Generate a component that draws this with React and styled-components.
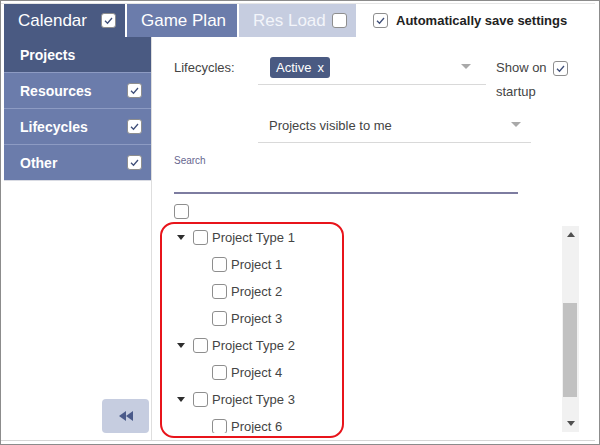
import React from 'react';
import styled, { createGlobalStyle } from 'styled-components';

const NAVY = '#4a5a82';
const MID = '#6b7cab';
const LIGHT = '#c6cde0';

const GlobalStyle = createGlobalStyle`
  html, body { margin: 0; padding: 0; background: #fff; }
  body { font-family: "Liberation Sans", Arial, sans-serif; }
  * { box-sizing: border-box; }
`;

const Frame = styled.div`
  position: relative;
  width: 600px;
  height: 445px;
  border: 1px solid #8c8c8c;
  background: #fff;
  overflow: hidden;
`;

const Panel = styled.div`
  margin-top: 2px;
  width: 594px;
  height: 438px;
  border-top: 1px solid #e6e6e6;
  border-bottom: 1px solid #d6d6d6;
  padding-left: 3px;
  display: flex;
  flex-direction: column;
`;

const TabBar = styled.div`
  height: 33px;
  display: flex;
  align-items: stretch;
  gap: 2px;
  flex-shrink: 0;
`;

const tabBg = { dark: NAVY, mid: MID, light: LIGHT };

const Tab = styled.div`
  width: ${(p) => p.$w}px;
  background: ${(p) => tabBg[p.$variant]};
  color: ${(p) => (p.$variant === 'light' ? '#f3f5fa' : '#fff')};
  font-size: 17px;
  display: flex;
  align-items: center;
  justify-content: space-between;
  padding: 0 9px 0 14px;
`;

const Box = styled.span`
  width: 15px;
  height: 15px;
  border: 1px solid #8e8e8e;
  border-radius: 3px;
  background: #fff;
  display: inline-flex;
  align-items: center;
  justify-content: center;
  flex-shrink: 0;
`;

const Check = () => (
  <svg width="11" height="11" viewBox="0 0 11 11">
    <polyline points="2,5.8 4.5,8.2 9,3" fill="none" stroke="#3e4e78" strokeWidth="1.3" />
  </svg>
);

const CheckBox = ({ checked }) => <Box>{checked ? <Check /> : null}</Box>;

const AutoSave = styled.label`
  margin-left: 15px;
  display: flex;
  align-items: center;
  gap: 8px;
  font-size: 13px;
  font-weight: bold;
  color: #222;
`;

const Body = styled.div`
  flex: 1;
  display: flex;
  min-height: 0;
`;

const Sidebar = styled.nav`
  width: 148px;
  border-right: 1px solid #dedede;
  display: flex;
  flex-direction: column;
  flex-shrink: 0;
`;

const SideItem = styled.div`
  height: 36px;
  background: ${(p) => (p.$active ? NAVY : MID)};
  border-bottom: 1px solid ${(p) => (p.$last ? '#d9dbe3' : '#8d9bc3')};
  color: #fff;
  font-size: 14px;
  font-weight: bold;
  display: flex;
  align-items: center;
  justify-content: space-between;
  padding: 0 9px 0 16px;
`;

const CollapseButton = styled.button`
  margin-top: auto;
  align-self: flex-end;
  margin-right: 2px;
  margin-bottom: 7px;
  width: 47px;
  height: 34px;
  border: none;
  border-radius: 4px;
  background: ${LIGHT};
  display: flex;
  align-items: center;
  justify-content: center;
  padding: 0;
`;

const Content = styled.section`
  flex: 1;
  display: flex;
  flex-direction: column;
  padding: 0 16px 0 22px;
  color: #444;
  font-size: 13px;
  min-width: 0;
`;

const FilterRow = styled.div`
  margin-top: 19px;
  display: flex;
  align-items: flex-start;
`;

const FieldLabel = styled.div`
  width: 84px;
  line-height: 23px;
  flex-shrink: 0;
`;

const SelectField = styled.div`
  width: ${(p) => p.$w}px;
  height: ${(p) => p.$h}px;
  margin-left: ${(p) => p.$indent || 0}px;
  border-bottom: 1px solid #d9d9d9;
  display: flex;
  align-items: center;
  justify-content: space-between;
  padding: ${(p) => p.$pad};
  flex-shrink: 0;
`;

const Chip = styled.span`
  height: 21px;
  background: ${NAVY};
  color: #fff;
  border-radius: 3px;
  padding: 0 6px;
  display: inline-flex;
  align-items: center;
  gap: 6px;
  font-size: 13px;
`;

const Arrow = () => (
  <svg width="10" height="6" viewBox="0 0 10 6">
    <polygon points="0,0 10,0 5,5" fill="#a9a9a9" />
  </svg>
);

const ShowOn = styled.div`
  margin-left: 10px;
  line-height: 24px;
`;

const ShowLine = styled.div`
  display: flex;
  align-items: center;
  gap: 6px;
  height: 24px;
`;

const SearchLabel = styled.div`
  margin-top: 12px;
  font-size: 10px;
  line-height: 12px;
  color: #67668f;
`;

const SearchInput = styled.div`
  width: 344px;
  height: 27px;
  border-bottom: 2px solid #7d7ca0;
`;

const SelectAll = styled.div`
  margin-top: 10px;
  display: flex;
`;

const ListArea = styled.div`
  margin-top: 5px;
  height: 209px;
  display: flex;
  align-items: flex-start;
`;

const Tree = styled.div`
  flex: 1;
  height: 100%;
  overflow: hidden;
`;

const TreeRow = styled.div`
  height: 27px;
  display: flex;
  align-items: center;
  padding-left: ${(p) => (p.$child ? 38 : 0)}px;
  color: #444;
  font-size: 13px;
  white-space: nowrap;
`;

const Toggle = styled.span`
  width: 19px;
  padding-left: 3px;
  display: flex;
  align-items: center;
`;

const RowText = styled.span`
  margin-left: 4px;
`;

const Scrollbar = styled.div`
  margin-top: 2px;
  width: 17px;
  height: 206px;
  background: #f1f1f1;
  display: flex;
  flex-direction: column;
  flex-shrink: 0;
`;

const ScrollBtn = styled.div`
  height: 17px;
  display: flex;
  align-items: center;
  justify-content: center;
`;

const ScrollTrack = styled.div`
  flex: 1;
`;

const Thumb = styled.div`
  margin: 60px 2px 0 1px;
  height: 94px;
  background: #c1c1c1;
`;

const Annotation = styled.div`
  position: absolute;
  left: 159px;
  top: 221px;
  width: 184px;
  height: 216px;
  border: 2px solid #e8141b;
  border-radius: 14px;
  pointer-events: none;
`;

const Caret = () => (
  <svg width="8" height="5" viewBox="0 0 8 5">
    <polygon points="0,0 8,0 4,5" fill="#2e2e2e" />
  </svg>
);

const tree = [
  { type: 'Project Type 1', children: ['Project 1', 'Project 2', 'Project 3'] },
  { type: 'Project Type 2', children: ['Project 4'] },
  { type: 'Project Type 3', children: ['Project 6'] },
];

const sideItems = [
  { label: 'Projects', active: true },
  { label: 'Resources', check: true },
  { label: 'Lifecycles', check: true },
  { label: 'Other', check: true, last: true },
];

export default function App() {
  return (
    <>
      <GlobalStyle />
      <Frame>
        <Panel>
          <TabBar>
            <Tab $variant="dark" $w={121}>
              Calendar <CheckBox checked />
            </Tab>
            <Tab $variant="mid" $w={110}>Game Plan</Tab>
            <Tab $variant="light" $w={117}>
              Res Load <CheckBox />
            </Tab>
            <AutoSave>
              <CheckBox checked />
              Automatically save settings
            </AutoSave>
          </TabBar>
          <Body>
            <Sidebar>
              {sideItems.map((it) => (
                <SideItem key={it.label} $active={it.active} $last={it.last}>
                  {it.label}
                  {it.check ? <CheckBox checked /> : null}
                </SideItem>
              ))}
              <CollapseButton aria-label="Collapse">
                <svg width="14" height="10" viewBox="0 0 14 10">
                  <polygon points="0,5 7,0 7,10" fill="#4a5a8a" />
                  <polygon points="7,5 14,0 14,10" fill="#4a5a8a" />
                </svg>
              </CollapseButton>
            </Sidebar>
            <Content>
              <FilterRow>
                <FieldLabel>Lifecycles:</FieldLabel>
                <SelectField $w={228} $h={29} $pad="1px 15px 7px 12px">
                  <Chip>
                    Active <span>x</span>
                  </Chip>
                  <Arrow />
                </SelectField>
                <ShowOn>
                  <ShowLine>
                    Show on <CheckBox checked />
                  </ShowLine>
                  <div>startup</div>
                </ShowOn>
              </FilterRow>
              <SelectField $w={273} $h={30} $indent={84} $pad="0 10px 5px 11px" style={{ marginTop: 9 }}>
                <span>Projects visible to me</span>
                <Arrow />
              </SelectField>
              <SearchLabel>Search</SearchLabel>
              <SearchInput />
              <SelectAll>
                <CheckBox />
              </SelectAll>
              <ListArea>
                <Tree>
                  {tree.map((g) => (
                    <React.Fragment key={g.type}>
                      <TreeRow>
                        <Toggle>
                          <Caret />
                        </Toggle>
                        <CheckBox />
                        <RowText>{g.type}</RowText>
                      </TreeRow>
                      {g.children.map((c) => (
                        <TreeRow key={c} $child>
                          <CheckBox />
                          <RowText>{c}</RowText>
                        </TreeRow>
                      ))}
                    </React.Fragment>
                  ))}
                </Tree>
                <Scrollbar>
                  <ScrollBtn>
                    <svg width="8" height="5" viewBox="0 0 8 5">
                      <polygon points="0,5 8,5 4,0" fill="#505050" />
                    </svg>
                  </ScrollBtn>
                  <ScrollTrack>
                    <Thumb />
                  </ScrollTrack>
                  <ScrollBtn>
                    <svg width="8" height="5" viewBox="0 0 8 5">
                      <polygon points="0,0 8,0 4,5" fill="#505050" />
                    </svg>
                  </ScrollBtn>
                </Scrollbar>
              </ListArea>
            </Content>
          </Body>
        </Panel>
        <Annotation />
      </Frame>
    </>
  );
}
